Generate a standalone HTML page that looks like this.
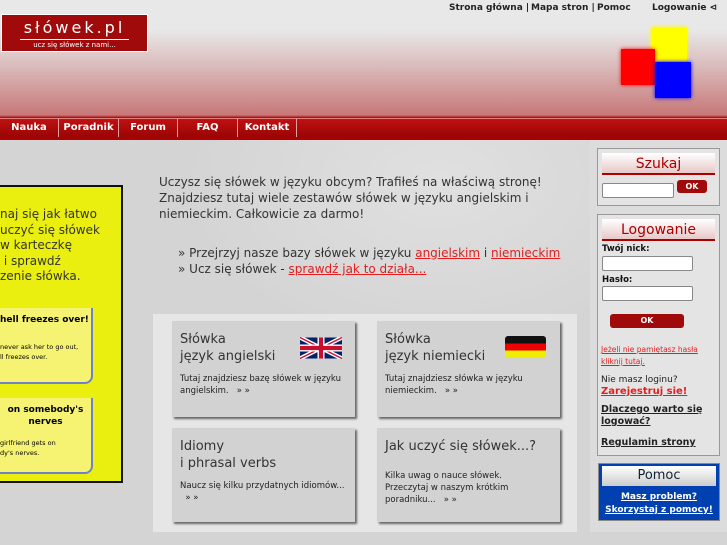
<!DOCTYPE html>
<html><head><meta charset="utf-8"><style>
*{margin:0;padding:0;box-sizing:border-box}
body{width:727px;height:545px;overflow:hidden;position:relative;font-family:"DejaVu Sans","Liberation Sans",sans-serif;background:#d4d4d4}
.a{position:absolute}
#top{left:0;top:0;width:727px;height:140px;background:linear-gradient(#e8e8e8 0,#e8e8e8 30px,#d9b6b6 70px,#c87878 115px,#a00 118px)}
#nav{left:0;top:118px;width:727px;height:19px;background:linear-gradient(#c01010,#9a0505);border-top:1px solid #e08080}
#nav div{position:absolute;top:0;height:18px;border-right:1px solid #e0a0a0;color:#fff;font-size:10px;font-weight:bold;text-align:center;line-height:17px}
.tl{top:3px;font-size:9px;font-weight:bold;color:#222}
#logo{left:1px;top:14px;width:147px;height:38px;background:#a00a0a;border:1px solid #fff;color:#fff;text-align:center}
.box{background:#f6f272;border-radius:0 0 8px 0;border-right:2px solid #7080d0;border-bottom:2px solid #7080d0}
.card{background:#d2d2d2;box-shadow:2px 2px 2px #666;color:#222}
.card h3{font-weight:normal;font-size:13px;line-height:17px;color:#333}
.card p{font-size:8.5px;line-height:12px;margin-top:8px}
.sb{background:#e4e4e4;border:1px solid #999}
.hd{background:linear-gradient(#fff,#e8c8c8);border-bottom:2px solid #a00;color:#a00;text-align:center;font-size:14px;height:22px;line-height:22px;margin:4px 4px 0}
.inp{background:#fff;border:1px solid #888;border-radius:2px}
.btn{background:#a00a0a;border-radius:3px;color:#fff;font-size:8px;font-weight:bold;text-align:center}
.lbl{font-size:8.5px;font-weight:bold;color:#111}
a{color:#e02020;text-decoration:underline}
</style></head><body>
<div id="top" class="a"></div>
<div class="a tl" style="left:449px">Strona główna |</div>
<div class="a tl" style="left:531px">Mapa stron |</div>
<div class="a tl" style="left:597px">Pomoc</div>
<div class="a tl" style="left:652px">Logowanie ⊲</div>
<div id="logo" class="a"><div style="font-size:16px;letter-spacing:3px;margin-top:3px;line-height:20px">słówek.pl</div><div style="border-top:1px solid #fff;margin:1px 18px 0;font-size:7px;line-height:11px">ucz się słówek z nami...</div></div>
<div class="a" style="left:651px;top:27px;width:36px;height:34px;background:#ff0;box-shadow:0 0 4px #ff0"></div>
<div class="a" style="left:621px;top:49px;width:34px;height:36px;background:#f00;box-shadow:0 0 4px #f00"></div>
<div class="a" style="left:655px;top:62px;width:36px;height:36px;background:#00f;box-shadow:0 0 4px #00f"></div>
<div id="nav" class="a">
<div style="left:0;width:59px">Nauka</div><div style="left:59px;width:60px">Poradnik</div><div style="left:119px;width:59px">Forum</div><div style="left:178px;width:60px">FAQ</div><div style="left:238px;width:59px">Kontakt</div></div>
<div class="a" style="left:0;top:140px;width:590px;height:405px;background:radial-gradient(ellipse 260px 170px at 440px 40px,#e0e0e0,#d4d4d4)"></div>
<div class="a" style="left:159px;top:174px;width:400px;font-size:12px;line-height:16px;color:#333">Uczysz się słówek w języku obcym? Trafiłeś na właściwą stronę! Znajdziesz tutaj wiele zestawów słówek w języku angielskim i niemieckim. Całkowicie za darmo!</div>
<div class="a" style="left:178px;top:245px;font-size:12px;line-height:16px;color:#333">» Przejrzyj nasze bazy słówek w języku <a>angielskim</a> i <a>niemieckim</a><br>» Ucz się słówek - <a>sprawdź jak to działa...</a></div>
<div class="a" style="left:-4px;top:185px;width:127px;height:298px;background:#eaef10;border:2px solid #111"></div>
<div class="a" style="left:0;top:207px;font-size:12px;line-height:15.5px;color:#333">naj się jak łatwo<br>uczyć się słówek<br>w karteczkę<br>&nbsp;i sprawdź<br>zenie słówka.</div>
<div class="a box" style="left:-10px;top:308px;width:103px;height:76px"><div style="font-size:9px;font-weight:bold;margin:7px 0 0 10px">hell freezes over!</div><div style="font-size:6.5px;margin:17px 0 0 10px;line-height:10px">never ask her to go out,<br>ll freezes over.</div></div>
<div class="a box" style="left:-10px;top:398px;width:103px;height:76px"><div style="font-size:9px;font-weight:bold;margin:6px 0 0 10px;text-align:center;line-height:12px">on somebody's<br>nerves</div><div style="font-size:6.5px;margin:10px 0 0 10px;line-height:10px">girlfriend gets on<br>dy's nerves.</div></div>
<div class="a" style="left:153px;top:314px;width:424px;height:218px;background:#e6e6e6"></div>
<div class="a card" style="left:172px;top:321px;width:183px;height:96px;padding:10px 8px"><h3>Słówka<br>język angielski</h3><p>Tutaj znajdziesz bazę słówek w języku angielskim. &nbsp; » »</p>
<svg class="a" style="left:128px;top:16px" width="42" height="22" viewBox="0 0 60 30"><rect width="60" height="30" fill="#012169"/><path d="M0,0 60,30M60,0 0,30" stroke="#fff" stroke-width="6"/><path d="M0,0 60,30M60,0 0,30" stroke="#c8102e" stroke-width="2"/><path d="M30,0v30M0,15h60" stroke="#fff" stroke-width="10"/><path d="M30,0v30M0,15h60" stroke="#c8102e" stroke-width="6"/></svg></div>
<div class="a card" style="left:377px;top:321px;width:183px;height:96px;padding:10px 8px"><h3>Słówka<br>język niemiecki</h3><p>Tutaj znajdziesz słówka w języku niemieckim. &nbsp; » »</p>
<div class="a" style="left:128px;top:15px;width:41px;height:22px;background:linear-gradient(#111 33%,#e00 33% 66%,#ee0 66%);border-radius:3px"></div></div>
<div class="a card" style="left:172px;top:428px;width:183px;height:94px;padding:10px 8px"><h3>Idiomy<br>i phrasal verbs</h3><p>Naucz się kilku przydatnych idiomów...<br>&nbsp; » »</p></div>
<div class="a card" style="left:377px;top:428px;width:183px;height:94px;padding:10px 30px 10px 8px"><h3 style="white-space:nowrap">Jak uczyć się słówek...?</h3><p style="margin-top:15px">Kilka uwag o nauce słówek. Przeczytaj w naszym krótkim poradniku... &nbsp; » »</p></div>
<div class="a" style="left:590px;top:140px;width:137px;height:392px;background:#dcdcdc"></div>
<div class="a sb" style="left:597px;top:148px;width:123px;height:58px"><div class="hd">Szukaj</div></div>
<div class="a inp" style="left:602px;top:183px;width:72px;height:15px"></div>
<div class="a btn" style="left:677px;top:180px;width:30px;height:13px;line-height:13px">OK</div>
<div class="a sb" style="left:597px;top:214px;width:123px;height:242px"><div class="hd">Logowanie</div></div>
<div class="a lbl" style="left:602px;top:244px">Twój nick:</div>
<div class="a inp" style="left:602px;top:256px;width:91px;height:15px"></div>
<div class="a lbl" style="left:602px;top:275px">Hasło:</div>
<div class="a inp" style="left:602px;top:286px;width:91px;height:15px"></div>
<div class="a btn" style="left:610px;top:314px;width:74px;height:14px;line-height:14px">OK</div>
<div class="a" style="left:601px;top:344px;font-size:7.5px;line-height:12px"><a>Jeżeli nie pamiętasz hasła<br>kliknij tutaj.</a></div>
<div class="a" style="left:601px;top:374px;font-size:9px;line-height:12px;color:#222">Nie masz loginu?<br><a style="font-weight:bold;font-size:10px">Zarejestruj sie!</a></div>
<div class="a" style="left:601px;top:404px;font-size:9.5px;line-height:12px;font-weight:bold;color:#222;text-decoration:underline">Dlaczego warto się<br>logować?<br><span style="display:block;margin-top:9px">Regulamin strony</span></div>
<div class="a" style="left:598px;top:463px;width:122px;height:58px;background:#0040b0;border:1px solid #888"><div style="margin:2px 3px 0;height:20px;background:linear-gradient(#fff,#ccc);color:#123;text-align:center;font-size:13px;line-height:20px">Pomoc</div><div style="color:#fff;text-align:center;font-size:9px;font-weight:bold;line-height:13px;text-decoration:underline;margin-top:5px">Masz problem?<br>Skorzystaj z pomocy!</div></div>
</body></html>
